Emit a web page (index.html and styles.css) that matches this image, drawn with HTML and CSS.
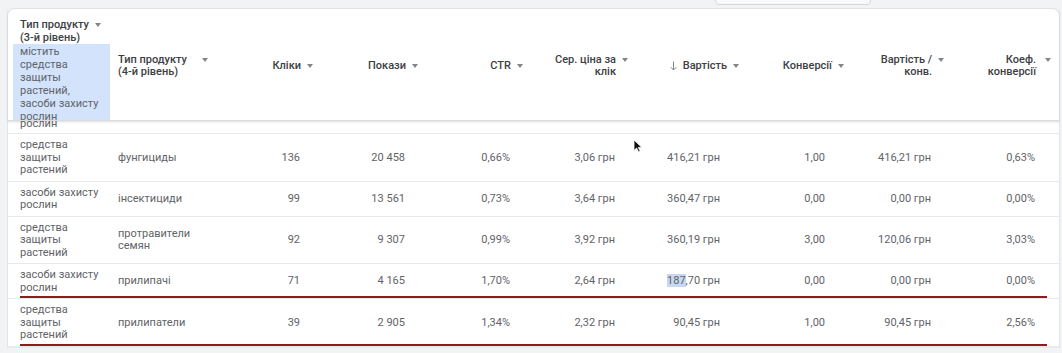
FILE: index.html
```html
<!DOCTYPE html>
<html lang="uk">
<head>
    <meta charset="UTF-8">
    <meta name="viewport" content="width=device-width, initial-scale=1.0">
    <title>Тип продукту - звіт</title>
    <link rel="stylesheet" href="styles.css">
</head>
<body>
    <div class="topbar">
        <div class="search"></div>
    </div>

    <div class="card">
        <!-- header -->
        <div class="grid head">
            <div class="hcell first">
                <div class="hlab">
                    <span>Тип продукту<br>(3-й рівень)</span>
                    <i class="caret"></i>
                </div>
                <div class="chip">містить<br>средства<br>защиты<br>растений,<br>засоби захисту<br>рослин</div>
            </div>
            <div class="hcell txt">
                <div class="hlab">
                    <span>Тип продукту<br>(4-й рівень)</span>
                    <i class="caret"></i>
                </div>
            </div>
            <div class="hcell num"><div class="hlab"><span class="label">Кліки</span><i class="caret"></i></div></div>
            <div class="hcell num"><div class="hlab"><span class="label">Покази</span><i class="caret"></i></div></div>
            <div class="hcell num"><div class="hlab"><span class="label">CTR</span><i class="caret"></i></div></div>
            <div class="hcell num"><div class="hlab"><span class="label">Сер. ціна за<br>клік</span><i class="caret"></i></div></div>
            <div class="hcell num shift">
                <div class="hlab">
                    <svg class="sort" width="7" height="10" viewBox="0 0 7 10"><path d="M3.5 0.5 V9 M0.8 6.2 L3.5 9 L6.2 6.2" fill="none" stroke="#80868b" stroke-width="1"/></svg>
                    <span class="label">Вартість</span><i class="caret"></i>
                </div>
            </div>
            <div class="hcell num shift"><div class="hlab"><span class="label">Конверсії</span><i class="caret"></i></div></div>
            <div class="hcell num"><div class="hlab"><span class="label">Вартість /<br>конв.</span><i class="caret"></i></div></div>
            <div class="hcell num last"><div class="hlab"><span class="label">Коеф.<br>конверсії</span><i class="caret"></i></div></div>
        </div>

        <!-- row scrolled under the header -->
        <div class="grid row partial">
            <div class="c1 tail">рослин</div>
            <div class="c2">фунгициды</div>
            <div>112</div>
            <div>8 240</div>
            <div>1,36%</div>
            <div>3,12 грн</div>
            <div>349,44 грн</div>
            <div>2,00</div>
            <div>174,72 грн</div>
            <div>1,79%</div>
        </div>

        <div class="grid row">
            <div class="c1">средства защиты растений</div>
            <div class="c2">фунгициды</div>
            <div>136</div>
            <div>20 458</div>
            <div>0,66%</div>
            <div>3,06 грн</div>
            <div>416,21 грн</div>
            <div>1,00</div>
            <div>416,21 грн</div>
            <div>0,63%</div>
        </div>
        <div class="grid row">
            <div class="c1">засоби захисту рослин</div>
            <div class="c2">інсектициди</div>
            <div>99</div>
            <div>13 561</div>
            <div>0,73%</div>
            <div>3,64 грн</div>
            <div>360,47 грн</div>
            <div>0,00</div>
            <div>0,00 грн</div>
            <div>0,00%</div>
        </div>
        <div class="grid row">
            <div class="c1">средства защиты растений</div>
            <div class="c2">протравители семян</div>
            <div>92</div>
            <div>9 307</div>
            <div>0,99%</div>
            <div>3,92 грн</div>
            <div>360,19 грн</div>
            <div>3,00</div>
            <div>120,06 грн</div>
            <div>3,03%</div>
        </div>
        <div class="grid row mark">
            <div class="c1">засоби захисту рослин</div>
            <div class="c2">прилипачі</div>
            <div>71</div>
            <div>4 165</div>
            <div>1,70%</div>
            <div>2,64 грн</div>
            <div><span class="sel">187</span>,70 грн</div>
            <div>0,00</div>
            <div>0,00 грн</div>
            <div>0,00%</div>
        </div>
        <div class="grid row mark">
            <div class="c1">средства защиты растений</div>
            <div class="c2">прилипатели</div>
            <div>39</div>
            <div>2 905</div>
            <div>1,34%</div>
            <div>2,32 грн</div>
            <div>90,45 грн</div>
            <div>1,00</div>
            <div>90,45 грн</div>
            <div>2,56%</div>
        </div>
        <div class="grid row"></div>
    </div>

    <svg class="cursor" width="10" height="14" viewBox="0 0 10 14"><path d="M1 1 L1 11.5 L3.6 9 L5.6 13 L7.2 12.2 L5.3 8.4 L8.8 8.4 Z" fill="#111" stroke="#fff" stroke-width="0.8"/></svg>
</body>
</html>
```

FILE: styles.css
```css
body {
    margin: 0;
    height: 353px;
    overflow: hidden;
    background: #f1f3f4;
    font-family: Roboto, "Noto Sans", Arial, sans-serif;
    font-size: 11px;
    color: #5f6368;
}
.topbar {
    height: 8px;
    overflow: hidden;
}
.search {
    margin: -17px 0 0 715px;
    width: 154px;
    height: 20px;
    border: 1px solid #d5d7da;
    border-radius: 4px;
    background: #f8f9fa;
}
.card {
    margin-left: 7px;
    width: 1051px;
    background: white;
    border: 1px solid #e3e4e6;
    border-bottom: none;
    border-radius: 8px 8px 0 0;
}
.grid {
    display: grid;
    grid-template-columns: 102px 110px 100px 105px 105px 105px 105px 105px 106px 108px;
}

/* header */
.head {
    height: 111px;
    position: relative;
    z-index: 1;
    border-bottom: 1px solid #dadce0;
    box-shadow: 0 1px 2px rgba(60,64,67,0.18);
}
.hcell {
    display: flex;
    min-height: 0;
    color: #3c4043;
    font-weight: 500;
    line-height: 12.5px;
    white-space: nowrap;
}
.hlab {
    display: flex;
    align-items: flex-start;
}
.caret {
    flex: none;
    width: 0;
    height: 0;
    margin: 4px 0 0 6px;
    border-left: 3.5px solid transparent;
    border-right: 3.5px solid transparent;
    border-top: 4px solid #80868b;
}
.hcell.num {
    justify-content: flex-end;
    align-items: center;
    padding: 3px 7px 0 0;
}
.hcell.num .label {
    text-align: right;
}
.hcell.shift {
    padding-right: 1px;
}
.hcell.last {
    padding-right: 8px;
}
.hcell.last .caret {
    margin-left: 9px;
}
.sort {
    flex: none;
    margin: 1px 6px 0 0;
}
.hcell.txt {
    align-items: center;
    padding: 3px 12px 0 8px;
}
.hcell.txt .hlab {
    flex: 1;
    justify-content: space-between;
}
.hcell.first {
    flex-direction: column;
    padding-top: 10px;
    overflow: hidden;
}
.first .hlab {
    justify-content: space-between;
    padding: 0 10px 0 12px;
}
.chip {
    flex: 1;
    min-height: 0;
    overflow: hidden;
    margin: 0 0 0 5px;
    padding: 1px 7px 0;
    background: #d3e3fc;
    color: #5f6368;
    font-weight: 400;
    line-height: 13px;
}

/* rows */
.row {
    position: relative;
    border-bottom: 1px solid #e8eaed;
}
.row > div {
    align-self: center;
    padding: 5px 20px 4px 0;
    line-height: 12.5px;
    text-align: right;
}
.row > .c1 {
    padding-left: 12px;
    padding-right: 8px;
    text-align: left;
}
.row > .c2 {
    padding-left: 8px;
    padding-right: 10px;
    text-align: left;
}
.row > div:last-child {
    padding-right: 24px;
}
.partial {
    height: 12px;
    overflow: hidden;
}
.partial > div {
    align-self: start;
    margin-top: -11px;
    padding-top: 0;
    padding-bottom: 0;
}
.partial > .tail {
    margin-top: -3.5px;
}
.mark::after {
    content: "";
    position: absolute;
    left: 12px;
    right: 12px;
    bottom: 0;
    height: 2px;
    background: #8e1c1c;
}
.sel {
    background: #c9d8f1;
}
.cursor {
    position: absolute;
    left: 633px;
    top: 139px;
}
```
